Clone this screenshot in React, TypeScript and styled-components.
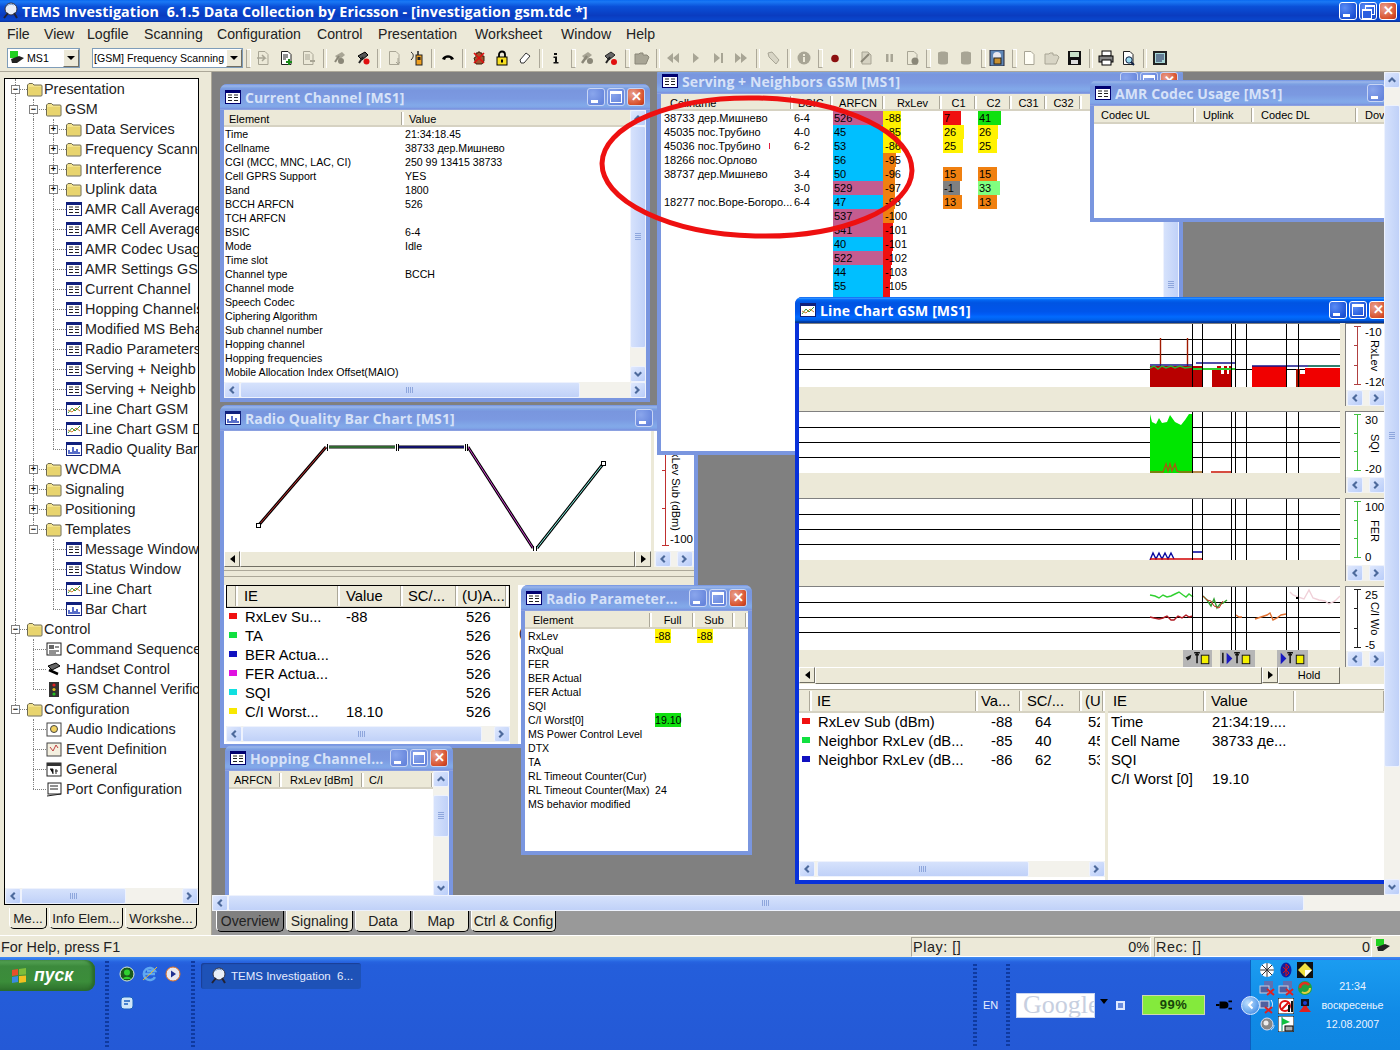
import React from 'react';
import styled, { createGlobalStyle, css } from 'styled-components';

const Global = createGlobalStyle`
  html, body { margin: 0; padding: 0; background: #ece9d8; }
  * { box-sizing: border-box; }
  #root { width: 1400px; height: 1050px; }
`;
const SANS = `"Liberation Sans", Arial, sans-serif`;
const TITLE = `"Open Sans", "Liberation Sans", sans-serif`;
const ACTIVE = `linear-gradient(180deg,#0058ee 0%,#3593ff 4%,#288eff 6%,#127dff 8%,#036ffc 10%,#0262ee 14%,#0057e5 20%,#0054e3 24%,#0055eb 56%,#005bf5 66%,#026afe 76%,#0062ef 86%,#0052d6 92%,#0040ab 94%,#003092 100%)`;
const INACTIVE = `linear-gradient(180deg,#7697e7 0,#7e9ee3 3%,#94afe8 6%,#97b4e9 8%,#82a5e4 14%,#7c9fe2 17%,#7996de 25%,#7b99e1 56%,#82a9e9 81%,#80a5e7 89%,#7b96e1 94%,#7a93df 97%,#abbae3 100%)`;

const Page = styled.div`
  width: 1400px; height: 1050px; overflow: hidden; display: flex; flex-direction: column;
  font-family: ${SANS}; background: #ece9d8; color: #000;
`;
const AppTitle = styled.div`
  height: 22px; display: flex; align-items: center; padding: 0 3px 0 2px; gap: 2px;
  background: linear-gradient(180deg,#0a6af0 0%,#1a78f5 8%,#0a50d8 30%,#0a3cc0 70%,#0a46cc 90%,#08309a 100%);
`;
const AppTitleText = styled.div`
  font: 700 14.3px ${TITLE}; color: #fff; flex: 1; white-space: pre; letter-spacing: 0.1px;
`;
const MenuBar = styled.div`
  height: 23px; display: flex; align-items: center; padding-left: 7px; font-size: 14.1px; background: #ece9d8; color: #222;
`;
const MenuItem = styled.span<{ $w: number }>`
  width: ${p => p.$w}px; flex: none; white-space: nowrap;
`;
const ToolBar = styled.div`
  height: 27px; display: flex; align-items: center; padding-left: 7px; background: #ece9d8; border-bottom: 1px solid #aca899;
`;
const Combo = styled.div<{ $w: number; $ml?: number }>`
  width: ${p => p.$w}px; margin-left: ${p => p.$ml ?? 0}px; height: 20px; background: #fff; border: 1px solid #7f9db9;
  display: flex; align-items: center; font-size: 10.6px; padding-left: 1px; gap: 1px; white-space: nowrap; overflow: hidden;
`;
const ComboText = styled.span`
  flex: 1; overflow: hidden;
`;
const ComboDrop = styled.span`
  width: 16px; height: 18px; background: #ece9d8; border: 1px solid; border-color: #fff #716f64 #716f64 #fff;
  display: flex; align-items: center; justify-content: center; flex: none;
  &::after { content: ''; border: 4px solid transparent; border-top: 4px solid #000; border-bottom: 0; }
`;
const ToolBtn = styled.span`
  width: 22.8px; height: 22px; display: flex; align-items: center; justify-content: center; flex: none;
`;
const ToolSep = styled.span<{ $grip?: boolean }>`
  width: 8.5px; height: 21px; flex: none; position: relative;
  &::after { content: ''; position: absolute; left: 3px; top: 1px; bottom: 1px; width: ${p => (p.$grip ? 3 : 2)}px;
    border-left: 1px solid #aca899; border-right: 1px solid #fff; ${p => p.$grip && css`border-top: 1px solid #fff; border-bottom: 1px solid #aca899;`} }
`;
const Main = styled.div`
  height: 863px; display: flex;
`;
const LeftPanel = styled.div`
  width: 212px; flex: none; display: flex; flex-direction: column; padding: 6px 12px 0 4px; background: #ece9d8;
  border-right: 1px solid #aca899;
`;
const TreeBox = styled.div`
  height: 827px; flex: none; border: 1px solid #000; background: #fff; display: flex; flex-direction: column; overflow: hidden;
`;
const TreeBody = styled.div`
  flex: 1; overflow: hidden; font-size: 14.4px;
`;
const TreeRow = styled.div<{ $pad: number }>`
  position: relative; height: 20px; display: flex; align-items: center; padding-left: ${p => p.$pad}px; white-space: nowrap; color: #222;
`;
const TreeLabel = styled.span<{ $gap: number }>`
  margin-left: ${p => p.$gap}px;
`;
const GuideV = styled.span<{ $x: number; $half?: boolean }>`
  position: absolute; left: ${p => p.$x}px; top: 0; height: ${p => (p.$half ? 10 : 20)}px; border-left: 1px dotted #808080;
`;
const GuideH = styled.span<{ $x: number; $w: number }>`
  position: absolute; left: ${p => p.$x}px; top: 10px; width: ${p => p.$w}px; border-top: 1px dotted #808080;
`;
const Expander = styled.span<{ $x: number }>`
  position: absolute; left: ${p => p.$x - 4}px; top: 6px; width: 9px; height: 9px; border: 1px solid #808080; background: #fff;
  font: 700 9px/7px ${SANS}; color: #000; display: flex; align-items: center; justify-content: center; z-index: 1;
`;
const TabRow = styled.div<{ $pl: number }>`
  display: flex; height: 21px; padding-left: ${p => p.$pl}px; margin-top: 3px; flex: none;
`;
const Tab = styled.div<{ $w: number; $on?: boolean; $small?: boolean }>`
  width: ${p => p.$w}px; height: 100%; margin-right: 2px; text-align: center; font-size: ${p => (p.$small ? 13.3 : 14)}px; line-height: 21px; color: #222;
  background: ${p => (p.$on ? '#808080' : '#ece9d8')}; border: 1px solid; border-color: #fff #000 #000 #fff; border-top: 0;
  border-radius: 0 0 5px 5px; white-space: nowrap; overflow: hidden;
`;
const Workspace = styled.div`
  flex: 1; display: flex; flex-direction: column; min-width: 0;
`;
const DeskRow = styled.div`
  height: 823px; display: flex; flex: none;
`;
const Desk = styled.div`
  position: relative; flex: 1; overflow: hidden; background: #808080;
`;
const TabStrip = styled.div`
  height: 24px; flex: none; background: #999; padding: 0 0 3px 4px; display: flex;
`;

const Win = styled.div<{ $x: number; $y: number; $w: number; $h: number; $on?: boolean }>`
  position: absolute; left: ${p => p.$x - 212}px; top: ${p => p.$y - 72}px; width: ${p => p.$w}px; height: ${p => p.$h}px;
  background: ${p => (p.$on ? '#0831d9' : '#7a96df')}; padding: 0 4px 4px; border-radius: 7px 7px 0 0;
  display: flex; flex-direction: column; overflow: hidden;
`;
const WinTitle = styled.div<{ $on?: boolean; $pr?: number }>`
  height: 26px; flex: none; margin: 0 -4px; padding: 0 ${p => p.$pr ?? 4}px 0 5px; display: flex; align-items: center; gap: 4px;
  background: ${p => (p.$on ? ACTIVE : INACTIVE)};
`;
const WinTitleText = styled.div<{ $on?: boolean }>`
  flex: 1; font: 700 14px ${TITLE}; color: ${p => (p.$on ? '#fff' : '#d6e2f8')}; white-space: nowrap; overflow: hidden; letter-spacing: .1px;
`;
const WinBtns = styled.div`
  display: flex; gap: 2px; flex: none;
`;
const WinBtn = styled.div<{ $kind: 'min' | 'max' | 'close' | 'restore'; $on?: boolean }>`
  width: 18px; height: 18px; border: 1px solid ${p => (p.$on ? '#fff' : '#c9d6f5')}; border-radius: 3px; position: relative; flex: none;
  background: ${p => p.$kind === 'close'
    ? 'radial-gradient(circle at 30% 30%, #e8a090, #d8502a 70%, #b8321a)'
    : p.$on ? 'radial-gradient(circle at 30% 30%, #5b8cf5, #1f55d8 70%, #1a46c0)' : 'radial-gradient(circle at 30% 30%, #8aa6ec, #6685dc 80%)'};
  ${p => p.$kind === 'min' && css`&::after { content: ''; position: absolute; left: 3px; bottom: 2px; width: 7px; height: 3px; background: #fff; }`}
  ${p => p.$kind === 'max' && css`&::after { content: ''; position: absolute; left: 2px; top: 2px; right: 2px; bottom: 2px; border: 1px solid #fff; border-top-width: 3px; }`}
  ${p => p.$kind === 'restore' && css`
    &::before { content: ''; position: absolute; left: 5px; top: 2px; width: 8px; height: 7px; border: 1px solid #fff; border-top-width: 2px; }
    &::after { content: ''; position: absolute; left: 2px; top: 6px; width: 8px; height: 7px; border: 1px solid #fff; border-top-width: 2px; background: #2a5fe0; }`}
  ${p => p.$kind === 'close' && css`&::after { content: '✕'; position: absolute; inset: 0; color: #fff; font: 700 13px/16px ${SANS}; text-align: center; }`}
`;
const WinBody = styled.div`
  flex: 1; background: #fff; display: flex; flex-direction: column; min-height: 0; overflow: hidden; position: relative;
`;
const Hz = styled.div`
  flex: 1; display: flex; min-height: 0;
`;
const Fill = styled.div`
  flex: 1; min-width: 0; min-height: 0; overflow: hidden; display: flex; flex-direction: column;
`;
const HeadRow = styled.div<{ $h: number; $size: number; $frame?: boolean }>`
  display: flex; height: ${p => p.$h}px; flex: none; background: #ece9d8; font-size: ${p => p.$size}px; border-bottom: 2px solid #d6d2c2;
  padding-top: ${p => (p.$size < 12 ? 2 : 1)}px;
  ${p => p.$frame && css`outline: 1px solid #000; outline-offset: -1px;`}
`;
const HeadCell = styled.div<{ $w: number; $pl?: number; $center?: boolean }>`
  width: ${p => p.$w}px; flex: none; padding-left: ${p => p.$pl ?? 5}px; display: flex; align-items: center; white-space: nowrap; overflow: hidden;
  border-right: 2px solid #fff; box-shadow: inset -1px 0 0 #aca899; ${p => p.$center && css`justify-content: center; padding-left: 0;`}
`;
const Row = styled.div<{ $h: number; $size: number }>`
  display: flex; height: ${p => p.$h}px; font-size: ${p => p.$size}px; line-height: ${p => p.$h}px; flex: none; white-space: nowrap;
`;
const Cell = styled.div<{ $w: number; $pl?: number }>`
  width: ${p => p.$w}px; flex: none; padding-left: ${p => p.$pl ?? 1}px; position: relative; overflow: hidden;
`;
const CellText = styled.span`
  position: relative;
`;
const Bar = styled.span<{ $w: number; $c: string; $x?: number }>`
  position: absolute; left: ${p => p.$x ?? 0}px; top: 0; bottom: 0; width: ${p => p.$w}px; background: ${p => p.$c};
`;
const Marker = styled.span<{ $c: string }>`
  display: block; width: 8px; height: 6px; margin: 5px 0 0 3px; background: ${p => p.$c};
`;
const RedTick = styled.span`
  position: absolute; left: 108px; top: 4px; width: 1px; height: 6px; background: #e02040;
`;

const ScrollH = styled.div`
  height: 16px; flex: none; display: flex; align-items: stretch; background: #f3f2ec;
`;
const ScrollV = styled.div`
  width: 16px; flex: none; display: flex; flex-direction: column; align-items: stretch; background: #f3f2ec;
`;
const Arrow = styled.div`
  width: 16px; height: 16px; flex: none; border-radius: 2px; border: 1px solid #eef2fd; background: linear-gradient(135deg,#dfe8fd,#b9cdf9);
  display: flex; align-items: center; justify-content: center;
`;
const ThumbH = styled.div<{ $l: number; $w: number }>`
  margin-left: ${p => p.$l}px; width: ${p => p.$w}px; background: linear-gradient(180deg,#d6e2fc,#c0d1f8); border: 1px solid #eef2fd; border-radius: 2px;
  display: flex; align-items: center; justify-content: center; flex: none;
  &::after { content: ''; width: 8px; height: 6px; background: repeating-linear-gradient(90deg,#8ea6dc 0 1px,transparent 1px 2px); }
`;
const ThumbV = styled.div<{ $t: number; $h: number }>`
  margin-top: ${p => p.$t}px; height: ${p => p.$h}px; background: linear-gradient(90deg,#d6e2fc,#c0d1f8); border: 1px solid #eef2fd; border-radius: 2px;
  display: flex; align-items: center; justify-content: center; flex: none;
  &::after { content: ''; width: 6px; height: 8px; background: repeating-linear-gradient(180deg,#8ea6dc 0 1px,transparent 1px 2px); }
`;
const Gap = styled.div`
  flex: 1;
`;
const ClassicBar = styled.div`
  height: 16px; flex: none; display: flex; background: #ece9d8;
`;
const ClassicBtn = styled.div<{ $dir: 'l' | 'r' }>`
  width: 16px; height: 16px; flex: none; background: #ece9d8; border: 1px solid; border-color: #fff #716f64 #716f64 #fff;
  display: flex; align-items: center; justify-content: center;
  &::after { content: ''; border: 4px solid transparent; ${p => (p.$dir === 'l' ? 'border-right: 5px solid #000; border-left: 0;' : 'border-left: 5px solid #000; border-right: 0;')} }
`;
const ClassicThumb = styled.div<{ $w?: number }>`
  ${p => (p.$w ? `width: ${p.$w}px; flex: none;` : 'flex: 1;')} background: #ece9d8; border: 1px solid; border-color: #fff #716f64 #716f64 #fff;
`;
const HoldBtn = styled.div`
  width: 62px; flex: none; text-align: center; font-size: 11px; line-height: 15px; background: #ece9d8; border: 1px solid; border-color: #fff #716f64 #716f64 #fff;
`;

const Splitter = styled.div`
  height: 18px; flex: none; background: #ece9d8; position: relative;
  &::after { content: ''; position: absolute; left: 0; right: 0; top: 3px; height: 5px; border-top: 1px solid #aca899; border-bottom: 1px solid #aca899; }
`;
const ChartRow = styled.div`
  height: 136px; flex: none; display: flex; background: #ece9d8;
`;
const ChartCol = styled.div<{ $w: number }>`
  width: ${p => p.$w}px; flex: none; display: flex; flex-direction: column;
`;
const QualSide = styled.div`
  flex: 1; display: flex; flex-direction: column; margin-left: 3px; background: #ece9d8;
`;
const QualLegend = styled.div`
  flex: 1; background: #fff; display: flex; align-items: flex-start; overflow: hidden; gap: 0; position: relative;
`;
const VText = styled.span<{ $size?: number }>`
  writing-mode: vertical-rl; font-size: ${p => p.$size ?? 11}px; white-space: nowrap; line-height: 12px;
`;
const LegendNum = styled.span`
  font-size: 11.5px; line-height: 13px; white-space: nowrap;
`;
const LegendStack = styled.div`
  display: flex; flex-direction: column; align-items: flex-start; justify-content: space-between; height: 100%; overflow: hidden; padding: 2px 0 1px;
`;
const QualStack = styled(LegendStack)`
  justify-content: flex-end; gap: 2px; padding: 0 0 5px; margin-left: -2px;
`;
const MidText = styled.div`
  padding-left: 4px;
`;
const ArrowPair = styled.div`
  height: 16px; flex: none; display: flex; justify-content: space-between; background: #f3f2ec; padding: 0 1px;
`;
const Panels = styled.div`
  display: flex; flex-direction: column; gap: 5px; flex: none; background: #ece9d8;
`;
const PanelRow = styled.div<{ $h: number }>`
  display: flex; height: ${p => p.$h}px; gap: 5px;
`;
const PanelPlot = styled.div`
  width: 541px; flex: none; display: flex; flex-direction: column;
  border-top: 1px solid #808080;
`;
const PlotStrip = styled.div`
  flex: 1; background: #ece9d8; display: flex; align-items: flex-end; padding-left: 384px;
`;
const EventBadge = styled.div<{ $w: number; $ml: number }>`
  width: ${p => p.$w}px; margin-left: ${p => p.$ml}px; height: 17px; background: #b6b6b6; display: flex; align-items: center; justify-content: center; flex: none;
`;
const PanelLegend = styled.div`
  width: 41px; flex: none; display: flex; flex-direction: column; border-top: 1px solid #808080; border-left: 1px solid #808080; min-width: 0;
`;
const LegendBody = styled.div`
  flex: 1; background: #fff; display: flex; gap: 1px; overflow: hidden; min-height: 0;
`;
const BelowBar = styled.div`
  display: flex; flex: none; height: 17px; background: #ece9d8;
`;
const Tables = styled.div`
  flex: 1; display: flex; min-height: 0; background: #fff; margin-top: 5px; border-top: 1px solid #aca899;
`;
const TableCol = styled.div<{ $w: number }>`
  width: ${p => p.$w}px; flex: none; display: flex; flex-direction: column; overflow: hidden; border-right: 3px solid #ece9d8;
`;
const QualTable = styled.div`
  width: 284px; margin-left: 2px; flex: none; display: flex; flex-direction: column; overflow: hidden; padding-bottom: 2px;
`;
const QualGutter = styled.div`
  width: 8px; flex: none; background: #ece9d8;
`;
const QualNext = styled.div`
  flex: 1; font-size: 12px; padding: 41px 0 0 1px;
`;

const StatusBar = styled.div`
  height: 22px; display: flex; align-items: center; font-size: 14.4px; background: #ece9d8; padding-left: 1px; color: #222;
  border-top: 1px solid #fff;
`;
const StatusHelp = styled.div`
  width: 910px; flex: none;
`;
const StatusPane = styled.div<{ $w: number }>`
  width: ${p => p.$w}px; flex: none; display: flex; justify-content: space-between; padding: 0 1px 0 1px; margin-right: 3px; height: 20px; line-height: 18px;
  border: 1px solid; border-color: #aca899 #fff #fff #aca899; white-space: pre;
`;
const Wide = styled.span`
  letter-spacing: .55px;
`;
const TaskBar = styled.div`
  height: 93px; flex: none; display: flex; background: linear-gradient(180deg,#3f8cf3 0,#2663e0 5px,#245edb 8px,#2459d6 100%); color: #fff; position: relative;
`;
const StartBtn = styled.div`
  width: 95px; height: 31px; margin-top: 3px; flex: none; border-radius: 0 9px 9px 0; background: linear-gradient(180deg,#5aa85a,#3c8a3c 20%,#3b8d3a 70%,#2c6e2c);
  display: flex; align-items: center; gap: 6px; padding-left: 10px; font: italic 700 17.5px ${SANS}; color: #fff; box-shadow: inset -3px 0 3px #2a6a2a;
`;
const Dots = styled.div<{ $ml: number }>`
  width: 4px; margin: 4px 0 3px ${p => p.$ml}px; flex: none; align-self: stretch; background: repeating-linear-gradient(180deg,#0f3aa0 0 2px,transparent 2px 4px);
`;
const Quick = styled.div`
  width: 73px; margin-left: 9px; padding-top: 8px; display: grid; grid-template-columns: repeat(3, 23px); grid-auto-rows: 29px; flex: none;
`;
const QuickIcon = styled.div`
  width: 18px; height: 18px; display: flex; align-items: center; justify-content: center;
`;
const TaskButton = styled.div`
  width: 160px; height: 26px; margin: 6px 0 0 6px; flex: none; background: #1e52b7; border-radius: 3px; display: flex; align-items: center; gap: 3px; padding-left: 9px;
  font-size: 11.5px; color: #e6ecff; box-shadow: inset 1px 1px 1px #1a3f96; white-space: pre;
`;
const RightTask = styled.div`
  margin-left: auto; display: flex; align-items: center; flex: none; padding-top: 3px;
`;
const EnBox = styled.div`
  font-size: 11px; margin: 0 0 0 6px; color: #e8eeff; width: 23px;
`;
const GoogleBox = styled.div`
  width: 79px; height: 25px; background: #fff; border: 1px solid #c8d4f0; overflow: hidden; font: 400 26px/22px "Liberation Serif", serif; color: #c7cfdf; padding-left: 6px; margin-left: 6px; white-space: nowrap;
`;
const DropTri = styled.div`
  margin: 0 0 8px 5px; border: 4px solid transparent; border-top: 5px solid #000; border-bottom: 0; flex: none;
`;
const MiniSq = styled.div`
  width: 9px; height: 9px; margin-left: 8px; border: 2px solid #dfe8ff; background: #6a8cdd; flex: none;
`;
const Battery = styled.div`
  width: 63px; height: 20px; margin-left: 17px; background: #84ea3c; border: 1px solid #cfd8b0; font: 700 13px/18px ${SANS}; letter-spacing: .5px; color: #17440a; text-align: center; flex: none;
`;
const PlugBox = styled.div`
  margin-left: 11px; width: 16px; display: flex; flex: none;
`;
const CollapseBtn = styled.div`
  width: 19px; height: 19px; margin-left: 9px; margin-right: -10px; border-radius: 50%; background: radial-gradient(circle at 35% 35%, #bfe0ff, #2a7de0); border: 1px solid #dceaff; display: flex; align-items: center; justify-content: center; z-index: 1; flex: none;
`;
const Tray = styled.div`
  width: 150px; height: 90px; flex: none; background: linear-gradient(180deg,#1b9cf0,#108ae6 60%,#0f86e2); border-left: 1px solid #0d5ec0; display: flex; padding: 2px 0 0 8px;
  align-self: flex-start;
`;
const TrayGrid = styled.div`
  width: 58px; display: grid; grid-template-columns: repeat(3, 19px); grid-auto-rows: 18px; flex: none;
`;
const Clock = styled.div`
  flex: 1; display: flex; flex-direction: column; align-items: center; gap: 5px; padding: 17px 12px 0 0; font-size: 10.7px; color: #eaf3ff; line-height: 14px;
`;

/* --------- Drawings --------- */
const Chevron: React.FC<{ d: 'l' | 'r' | 'u' | 'd' }> = ({ d }) => {
  const pts = { l: '6,1 2,5 6,9 7.5,7.5 5,5 7.5,2.5', r: '3,1 7,5 3,9 1.5,7.5 4,5 1.5,2.5', u: '1,6 5,2 9,6 7.5,7.5 5,5 2.5,7.5', d: '1,4 5,8 9,4 7.5,2.5 5,5 2.5,2.5' }[d];
  return <svg width="10" height="10" viewBox="0 0 10 10"><polygon points={pts} fill="#4d6a9c" /></svg>;
};
const Folder = () => (
  <svg width="16" height="15" viewBox="0 0 16 15" style={{ flex: 'none' }}><path d="M.5 4 V13 a1 1 0 0 0 1 1 H14 a1 1 0 0 0 1-1 V4 a1 1 0 0 0-1-1 H7 L5.5 1.5 H2 L.5 3 Z" fill="#f2e28c" stroke="#6e6a50" /><path d="M1.5 5 H14 V13 H1.5Z" fill="#e8d46e" /></svg>
);
const TableIco = ({ light }: { light?: boolean }) => (
  <svg width="16" height="14" viewBox="0 0 16 14" style={{ flex: 'none' }}>
    <rect x=".5" y=".5" width="15" height="13" fill="#fff" stroke={light ? '#000070' : '#10207c'} />
    <rect x="0" y="0" width="16" height="3" fill={light ? '#000070' : '#10207c'} />
    <path d="M3 5h4M3 7.5h4M3 10.5h4M9 5h4M9 7.5h4M9 10.5h4" stroke="#222" strokeWidth="1.2" />
  </svg>
);
const LineIco = () => (
  <svg width="16" height="14" viewBox="0 0 16 14" style={{ flex: 'none' }}>
    <rect x=".5" y=".5" width="15" height="13" fill="#fff" stroke="#10207c" />
    <rect x="0" y="0" width="16" height="3" fill="#10207c" />
    <path d="M2 11 L6 6 L9 9 L14 4" stroke="#3a9a3a" fill="none" /><path d="M2 8 L6 10 L10 6 L14 9" stroke="#d08030" fill="none" />
  </svg>
);
const BarIco = () => (
  <svg width="16" height="14" viewBox="0 0 16 14" style={{ flex: 'none' }}>
    <rect x=".5" y=".5" width="15" height="13" fill="#fff" stroke="#10207c" />
    <rect x="0" y="0" width="16" height="3" fill="#10207c" />
    <path d="M3 12V8M5 12V10M7 12V5M9 12V9M11 12V7M13 12V10" stroke="#1030b0" strokeWidth="1.4" />
  </svg>
);
const CfgIco = ({ k }: { k: string }) => (
  <svg width="17" height="15" viewBox="0 0 17 15" style={{ flex: 'none' }}>
    {k === 'cmd' && <><rect x="1" y="1" width="14" height="12" fill="#fff" stroke="#222" /><rect x="3" y="3" width="5" height="4" fill="#666" /><path d="M9 5h4M3 9h10M3 11h7" stroke="#222" /></>}
    {k === 'hand' && <><path d="M2 4 L10 1 L14 4 L6 8 Z" fill="#666" stroke="#000" /><path d="M3 8 L12 12" stroke="#000" strokeWidth="2.5" /></>}
    {k === 'traffic' && <><rect x="3" y="0" width="10" height="15" fill="#333" /><circle cx="8" cy="3" r="1.6" fill="#e02020" /><circle cx="8" cy="7.5" r="1.6" fill="#e0c020" /><circle cx="8" cy="12" r="1.6" fill="#20c020" /></>}
    {k === 'audio' && <><rect x="1" y="1" width="14" height="13" fill="#fff" stroke="#444" /><circle cx="8" cy="7" r="3.5" fill="#f0d060" stroke="#444" /></>}
    {k === 'event' && <><rect x="1" y="1" width="14" height="13" fill="#f4f0e0" stroke="#444" /><path d="M4 5l3 4 3-6 2 3" stroke="#c04040" fill="none" /></>}
    {k === 'general' && <><rect x="1" y="1" width="14" height="13" fill="#fff" stroke="#222" /><rect x="1" y="1" width="14" height="3" fill="#333" /><path d="M4 7h3v5M10 7v5M9 9h3" stroke="#222" /></>}
    {k === 'port' && <><rect x="2" y="1" width="13" height="11" fill="#fff" stroke="#222" /><path d="M1 14 L15 12 M4 4h8M4 7h8" stroke="#222" /></>}
  </svg>
);
const G: React.FC<{ k: string }> = ({ k }) => {
  const gray = '#a8a595', dark = '#8a8778';
  const Doc = (c: string, f = '#ece9d8') => <path d="M3.5 1.5 H10 L13 4.5 V14.5 H3.5 Z" fill={f} stroke={c} />;
  const body: Record<string, React.ReactNode> = {
    docA: <>{Doc(gray)}<path d="M2 8 H10 L7 5 M10 8 L7 11" stroke={gray} fill="none" strokeWidth="1.5" /></>,
    docP: <>{Doc('#222', '#fff')}<path d="M5 5h5M5 7h5M5 9h3" stroke="#222" /><path d="M11 9v6M8 12h6" stroke="#1a8a1a" strokeWidth="2" /></>,
    docG: <>{Doc(gray)}<path d="M5 5h5M5 7h5M5 9h5" stroke={gray} /><path d="M10 11h5" stroke={gray} strokeWidth="2" /></>,
    phG: <><path d="M3 6 L10 2 L13 5 L7 10 Z" fill={gray} /><circle cx="9" cy="11" r="3" fill={dark} /><path d="M3 12 L7 6" stroke={dark} strokeWidth="2" /></>,
    phR: <><path d="M3 6 L10 2 L13 5 L7 10 Z" fill="#555" stroke="#000" /><path d="M4 13 L8 7" stroke="#222" strokeWidth="2" /><circle cx="11.5" cy="11.5" r="3" fill="#e01010" /></>,
    docD: <>{Doc(gray)}<path d="M12 8v6M10 12l2 2 2-2" stroke={gray} fill="none" /></>,
    radio: <><rect x="7" y="5" width="6" height="10" fill="#f0a020" stroke="#222" /><path d="M9 5V1" stroke="#222" strokeWidth="1.5" /><path d="M2 2c3 2 3 5 0 8" stroke="#222" fill="none" /><rect x="8.5" y="7" width="3" height="3" fill="#222" /></>,
    handset: <path d="M2 9 C4 4 12 4 14 9 L11 10 L10 8 C8 7.5 8 7.5 6 8 L5 10 Z" fill="#000" />,
    hand: <><path d="M5 14 L3 8 L5 7 V3 H7 V2 H9 V3 H11 V6 H13 V11 L11 14 Z" fill="#a0522d" stroke="#402010" /><path d="M3 3 L13 13 M13 3 L3 13" stroke="#e01010" strokeWidth="1.6" /></>,
    lock: <><path d="M5 7 V4.5 a3 3 0 0 1 6 0 V7" stroke="#000" strokeWidth="1.8" fill="none" /><rect x="3" y="7" width="10" height="8" fill="#f8e020" stroke="#000" /><rect x="7" y="9.5" width="2" height="3" fill="#000" /></>,
    eraser: <path d="M3 10 L9 3 L13 6 L7 13 L4 13 Z" fill="#fff" stroke="#333" />,
    info: <path d="M6 3h3v2H6zM5.5 6.5H9V12h1.5v1.5h-5V12H7V8H5.5z" fill="#111" />,
    phG2: <><path d="M3 6 L9 2 L13 5 L7 10 Z" fill={gray} /><path d="M3 13 L8 6" stroke={dark} strokeWidth="2.5" /><circle cx="11" cy="11" r="3" fill={dark} /></>,
    phR2: <><path d="M3 6 L9 2 L13 5 L7 10 Z" fill="#666" stroke="#222" /><path d="M4 13 L8 7" stroke="#222" strokeWidth="2" /><circle cx="12" cy="12" r="3" fill="#e01010" /></>,
    folderG: <path d="M1 14 V4 H5 L6 3 H9 V5 H13 L15 7 L12 14 Z" fill={gray} stroke={dark} />,
    rew: <path d="M8 3 L2 8 L8 13 Z M14 3 L8 8 L14 13 Z" fill={gray} />,
    play: <path d="M5 3 L11 8 L5 13 Z" fill={gray} />,
    stepf: <><path d="M4 3 L10 8 L4 13 Z" fill={gray} /><rect x="11" y="3" width="2" height="10" fill={gray} /></>,
    ff: <path d="M2 3 L8 8 L2 13 Z M8 3 L14 8 L8 13 Z" fill={gray} />,
    torch: <path d="M3 3 L7 2 L14 10 L11 14 L4 7 Z" fill="#d8d5c5" stroke={gray} />,
    infoC: <><circle cx="8" cy="8" r="6.5" fill={gray} /><path d="M7 4h2v2H7zM7 7h2v5H7z" fill="#ece9d8" /></>,
    rec: <circle cx="8" cy="8.5" r="3.8" fill="#8c1010" />,
    recG: <><path d="M4 2 H10 L13 5 V14 H4 Z" fill="#d5d2c2" stroke={gray} /><path d="M3 12 L11 4" stroke={dark} strokeWidth="2" /></>,
    pause: <path d="M5 4h2.5v8H5zM9.5 4H12v8H9.5z" fill={gray} />,
    docC: <>{Doc(gray)}<circle cx="11" cy="11" r="3.5" fill={dark} /></>,
    cyl: <path d="M3 3 C3 1 13 1 13 3 V13 C13 15 3 15 3 13 Z" fill={gray} />,
    photo: <><rect x="1" y="0" width="14" height="16" fill="#6088b8" stroke="#223" /><circle cx="8" cy="6" r="4" fill="#e8e8f0" /><rect x="5" y="8" width="7" height="6" fill="#c89030" stroke="#222" /></>,
    doc: Doc(gray, '#fffef5'),
    fold: <path d="M1 14 V4 H5 L6 3 H9 V5 H13 L15 7 L12 14 Z" fill="#d8d5c5" stroke={gray} />,
    floppy: <><rect x="2" y="1" width="13" height="14" fill="#111" /><rect x="4" y="2" width="9" height="5" fill="#c8e0c8" /><rect x="5" y="10" width="7" height="4" fill="#ddd" /></>,
    printer: <><rect x="4" y="1" width="9" height="5" fill="#fff" stroke="#000" /><rect x="1" y="6" width="14" height="6" fill="#888" stroke="#000" /><rect x="4" y="10" width="9" height="5" fill="#fff" stroke="#000" /></>,
    prev: <>{Doc('#222', '#fff')}<circle cx="9" cy="10" r="3.2" fill="#9fdcf0" stroke="#124" /><path d="M11 12l3 3" stroke="#124" strokeWidth="2" /></>,
    screen: <><rect x="1" y="1" width="14" height="14" fill="#222" /><rect x="3" y="3" width="10" height="10" fill="#a8d8d8" /><path d="M4 5h8M4 7h8M4 9h8M4 11h6" stroke="#225" /></>,
  };
  return <svg width="16" height="16" viewBox="0 0 16 16">{body[k]}</svg>;
};
const MsIcon = () => (
  <svg width="17" height="17" viewBox="0 0 17 17" style={{ flex: 'none' }}>
    <rect x="1" y="1" width="8" height="7" fill="#20d020" /><path d="M2 9 L10 6 L15 8 L8 13 L3 13 Z" fill="#222" />
  </svg>
);
const TemsIcon = () => (
  <svg width="18" height="18" viewBox="0 0 18 18" style={{ flex: 'none' }}>
    <circle cx="9" cy="7" r="6" fill="#e8eef8" stroke="#334" /><path d="M4 5a6 6 0 0 1 8-2" stroke="#7aa0d0" fill="none" /><path d="M2 16 L6 11 M15 16 L12 11" stroke="#223" strokeWidth="2" />
  </svg>
);
const XpFlag = () => (
  <svg width="18" height="18" viewBox="0 0 18 18"><path d="M2 3 L8 2 V8 L2 9Z" fill="#e8502a" /><path d="M9 2 L16 1 V7.5 L9 8Z" fill="#7dbd3a" /><path d="M2 10 L8 9 V15 L2 16Z" fill="#3a8be0" /><path d="M9 9 L16 8.5 V15 L9 16Z" fill="#f2c020" /></svg>
);

const Event: React.FC<{ k: number }> = ({ k }) => (
  <svg width={k === 1 ? 29 : k === 2 ? 35 : 31} height="17" viewBox={`0 0 ${k === 1 ? 29 : k === 2 ? 35 : 31} 18`}>
    {k === 1 && <><path d="M2 8 L8 5 L7 9 L4 11Z" fill="#111" /><path d="M11 3h6M12 5h4M14 3v11" stroke="#111" strokeWidth="1.6" /><rect x="18.5" y="5.5" width="8" height="9" fill="#f4f000" stroke="#111" /></>}
    {k === 2 && <><path d="M2 3v11" stroke="#111" strokeWidth="1.6" /><path d="M6 3 L12 9 L6 15Z" fill="#1818c0" /><path d="M14 3h6M15 5h4M17 3v11" stroke="#111" strokeWidth="1.6" /><rect x="22.5" y="5.5" width="8" height="9" fill="#f4f000" stroke="#111" /></>}
    {k === 3 && <><path d="M3 3 L9 9 L3 15Z" fill="#1818c0" /><path d="M10 3h6M11 5h4M13 3v11" stroke="#111" strokeWidth="1.6" /><rect x="19.5" y="5.5" width="8" height="9" fill="#f4f000" stroke="#111" /></>}
  </svg>
);
const VLINES = [393, 403, 432, 436, 447, 487, 499];
const Plot: React.FC<{ h: number; children?: React.ReactNode }> = ({ h, children }) => (
  <svg width="541" height={h} viewBox={`0 0 541 ${h}`} style={{ display: 'block', flex: 'none', background: '#fff' }}>
    {[15, 30, 45].map(y => <line key={y} x1="0" x2="541" y1={y + .5} y2={y + .5} stroke="#000" />)}
    {children}
    {VLINES.map(x => <line key={x} x1={x + .5} x2={x + .5} y1={0} y2={h} stroke="#000" />)}
  </svg>
);
const Panel1 = () => (
  <Plot h={63}>
    <rect x="351" y="42" width="52" height="21" fill="#b80000" />
    <path d="M361.5 14V42M388.5 14V42" stroke="#a01a00" strokeWidth="1.4" />
    <path d="M413 63V46H418V42H422V50H425V42H428V50H430V42H432V63Z" fill="#c00000" />
    <rect x="453" y="42" width="34" height="21" fill="#f00000" />
    <rect x="497" y="45" width="4" height="18" fill="#a81000" />
    <path d="M501 63V50H506V44H541V63Z" fill="#f00000" />
    <path d="M351 41H393M397 39H436M453 42H509" stroke="#14148c" strokeWidth="1.4" />
    <polyline points="351,44 355,42 359,45 363,42 367,44 372,42 376,44 381,42 386,44 393,43" stroke="#30b030" fill="none" strokeWidth="1.4" />
    <path d="M393 45H437" stroke="#30d030" strokeWidth="2" />
    <path d="M509 42H541" stroke="#308070" strokeWidth="2" />
  </Plot>
);
const Panel2 = () => (
  <Plot h={61}>
    <polygon points="351,2 353,10 357,12 360,6 363,11 368,10 371,3 376,10 382,13 386,8 390,2 393,2 393,61 351,61" fill="#00e600" />
    <polyline points="351,60 364,60 367,52 369,59 371,52 373,59 376,52 378,59 381,60 403,60" stroke="#a06010" fill="none" strokeWidth="1.4" />
    <path d="M412 60H432" stroke="#c81000" strokeWidth="1.6" />
  </Plot>
);
const Panel3 = () => (
  <Plot h={61}>
    <polyline points="351,61 354,54 357,60 360,54 363,60 366,54 369,60 372,54 375,60" stroke="#0a0aa0" fill="none" strokeWidth="1.4" />
    <path d="M351 60H403" stroke="#d00000" strokeWidth="1.6" />
    <path d="M393 53H403" stroke="#0a0aa0" strokeWidth="1.6" />
  </Plot>
);
const Panel4 = () => (
  <Plot h={63}>
    <polyline points="351,8 356,9 360,11 364,8 368,10 372,9 376,7 380,5 384,8 387,10 390,7 394,10" stroke="#30d030" fill="none" strokeWidth="1.4" />
    <polyline points="351,30 355,31 360,32 364,31 368,29 372,33 375,33 379,29 383,31 387,28 390,30 394,29" stroke="#b01820" fill="none" strokeWidth="1.4" />
    <polyline points="404,9 408,13 412,19 415,12 418,21 421,17 424,16 428,13" stroke="#30a030" fill="none" strokeWidth="1.4" />
    <polyline points="404,9 408,13 412,14 415,19 420,21 424,14" stroke="#c03020" fill="none" strokeWidth="1" />
    <polyline points="437,28 440,30 443,30" stroke="#e07030" fill="none" strokeWidth="1.4" />
    <polyline points="456,32 462,30 468,28 471,26 474,33 478,31 482,28 487,27" stroke="#e07030" fill="none" strokeWidth="1.4" />
    <polyline points="491,5 494,8 499,10 505,12 510,3 514,11 520,13 526,14 530,17 536,14 541,9" stroke="#f0d0d8" fill="none" strokeWidth="1.4" />
    <path d="M497 11h2" stroke="#000" strokeWidth="2" />
  </Plot>
);
const Axis: React.FC<{ c: string; h: number; top?: number }> = ({ c, h, top = 2 }) => (
  <svg width="13" height={h} viewBox={`0 0 13 ${h}`} style={{ flex: 'none', marginLeft: 5 }}>
    <line x1="6.5" x2="6.5" y1={top} y2={h - 3} stroke={c} />
    {[0, 1, 2, 3].map(i => {
      const y = Math.round(top + i * ((h - 3 - top) / 3));
      return <line key={i} x1={3} x2={i === 0 || i === 3 ? 10 : 6.5} y1={y + .5} y2={y + .5} stroke={c} />;
    })}
  </svg>
);
const QualChart = () => (
  <svg width="427" height="120" viewBox="0 0 427 120" style={{ display: 'block', flex: 'none', background: '#fff' }}>
    <path d="M34 95 L102 16" stroke="#000" strokeWidth="3" /><path d="M34 95 L102 16" stroke="#c83030" />
    <path d="M105 16 H171" stroke="#000" strokeWidth="3" /><path d="M105 16 H171" stroke="#60d060" />
    <path d="M175 16 H240" stroke="#000" strokeWidth="3" /><path d="M175 16 H240" stroke="#2020d0" />
    <path d="M244 16 L309 117" stroke="#000" strokeWidth="3" /><path d="M244 16 L309 117" stroke="#d040d0" />
    <path d="M313 117 L379 33" stroke="#000" strokeWidth="3" /><path d="M313 117 L379 33" stroke="#80f0e0" />
    <rect x="32.5" y="92.5" width="4" height="4" fill="#fff" stroke="#000" />
    <rect x="377.5" y="30.5" width="4" height="4" fill="#fff" stroke="#000" />
    {[103, 172, 174, 241, 243].map(x => <line key={x} x1={x + .5} x2={x + .5} y1="13" y2="20" stroke="#000" />)}
    <path d="M309.5 115v5M312.5 115v5" stroke="#000" />
  </svg>
);

/* ---------- data ---------- */
type Node = { t: string; l: 0 | 1 | 2; k: string; e?: '+' | '-' };
const TREE: Node[] = [
  { t: 'Presentation', l: 0, k: 'f', e: '-' }, { t: 'GSM', l: 1, k: 'f', e: '-' },
  { t: 'Data Services', l: 2, k: 'f', e: '+' }, { t: 'Frequency Scann', l: 2, k: 'f', e: '+' },
  { t: 'Interference', l: 2, k: 'f', e: '+' }, { t: 'Uplink data', l: 2, k: 'f', e: '+' },
  { t: 'AMR Call Average', l: 2, k: 't' }, { t: 'AMR Cell Average', l: 2, k: 't' }, { t: 'AMR Codec Usag', l: 2, k: 't' },
  { t: 'AMR Settings GS', l: 2, k: 't' }, { t: 'Current Channel', l: 2, k: 't' }, { t: 'Hopping Channels', l: 2, k: 't' },
  { t: 'Modified MS Beha', l: 2, k: 't' }, { t: 'Radio Parameters', l: 2, k: 't' }, { t: 'Serving + Neighb', l: 2, k: 't' },
  { t: 'Serving + Neighb', l: 2, k: 't' }, { t: 'Line Chart GSM', l: 2, k: 'l' }, { t: 'Line Chart GSM D', l: 2, k: 'l' },
  { t: 'Radio Quality Bar', l: 2, k: 'b' }, { t: 'WCDMA', l: 1, k: 'f', e: '+' }, { t: 'Signaling', l: 1, k: 'f', e: '+' },
  { t: 'Positioning', l: 1, k: 'f', e: '+' }, { t: 'Templates', l: 1, k: 'f', e: '-' },
  { t: 'Message Window', l: 2, k: 't' }, { t: 'Status Window', l: 2, k: 't' }, { t: 'Line Chart', l: 2, k: 'l' }, { t: 'Bar Chart', l: 2, k: 'b' },
  { t: 'Control', l: 0, k: 'f', e: '-' }, { t: 'Command Sequence', l: 1, k: 'cmd' }, { t: 'Handset Control', l: 1, k: 'hand' },
  { t: 'GSM Channel Verifica', l: 1, k: 'traffic' }, { t: 'Configuration', l: 0, k: 'f', e: '-' }, { t: 'Audio Indications', l: 1, k: 'audio' },
  { t: 'Event Definition', l: 1, k: 'event' }, { t: 'General', l: 1, k: 'general' }, { t: 'Port Configuration', l: 1, k: 'port' },
];
const G0 = 10, G1 = 28, G2 = 48;
const guides = (i: number) => {
  const g: { x: number; half?: boolean }[] = [];
  if (i <= 31) g.push({ x: G0, half: i === 31 });
  if (i >= 1 && i <= 22) g.push({ x: G1, half: i === 22 });
  if (i >= 28 && i <= 30) g.push({ x: G1, half: i === 30 });
  if (i >= 32 && i <= 35) g.push({ x: G1, half: i === 35 });
  if (i >= 2 && i <= 18) g.push({ x: G2, half: i === 18 });
  if (i >= 23 && i <= 26) g.push({ x: G2, half: i === 26 });
  return g;
};
const TreeIcon: React.FC<{ k: string }> = ({ k }) => {
  if (k === 'f') return <Folder />;
  if (k === 't') return <TableIco />;
  if (k === 'l') return <LineIco />;
  if (k === 'b') return <BarIco />;
  return <CfgIco k={k} />;
};
const PAD = { 0: 22, 1: 41, 2: 61 } as const;
const EXP = { 0: G0, 1: G1, 2: G2 } as const;

const TOOLS: string[] = ['docA', 'docP', 'docG', '|', 'phG', 'phR', '|', 'docD', 'radio', '|', 'handset', '|', 'hand', 'lock', 'eraser', '|', 'info', '#', 'phG2', 'phR2', '#', 'folderG', '|', 'rew', 'play', 'stepf', 'ff', '|', 'torch', '|', 'infoC', '#', 'rec', '|', 'recG', 'pause', 'docC', '#', 'cyl', 'cyl', '#', 'photo', '#', 'doc', 'fold', 'floppy', '|', 'printer', 'prev', '|', 'screen'];
const MENU: [string, number][] = [['File', 37], ['View', 43], ['Logfile', 57], ['Scanning', 73], ['Configuration', 100], ['Control', 61], ['Presentation', 97], ['Worksheet', 86], ['Window', 65], ['Help', 40]];
const CHANNEL: [string, string][] = [
  ['Time', '21:34:18.45'], ['Cellname', '38733 дер.Мишнево'], ['CGI (MCC, MNC, LAC, CI)', '250 99 13415 38733'], ['Cell GPRS Support', 'YES'],
  ['Band', '1800'], ['BCCH ARFCN', '526'], ['TCH ARFCN', ''], ['BSIC', '6-4'], ['Mode', 'Idle'], ['Time slot', ''], ['Channel type', 'BCCH'],
  ['Channel mode', ''], ['Speech Codec', ''], ['Ciphering Algorithm', ''], ['Sub channel number', ''], ['Hopping channel', ''], ['Hopping frequencies', ''],
  ['Mobile Allocation Index Offset(MAIO)', ''],
];
const PINK = '#c45c90', CYAN = '#00bfff', YEL = '#fff200', ORG = '#f08010', RED = '#f01010', GRY = '#808080', GRN = '#10e010', LGR = '#80ff80';
type Sv = { n?: string; b?: string; a: string; ac: string; r: string; rw: number; rc: string; c1?: [string, number, string]; c2?: [string, number, string]; tick?: boolean };
const SERVING: Sv[] = [
  { n: '38733 дер.Мишнево', b: '6-4', a: '526', ac: PINK, r: '-88', rw: 18, rc: YEL, c1: ['7', 18, RED], c2: ['41', 23, GRN] },
  { n: '45035 пос.Трубино', b: '4-0', a: '45', ac: CYAN, r: '-85', rw: 18, rc: YEL, c1: ['26', 21, YEL], c2: ['26', 20, YEL] },
  { n: '45036 пос.Трубино', b: '6-2', a: '53', ac: CYAN, r: '-86', rw: 18, rc: YEL, c1: ['25', 20, YEL], c2: ['25', 19, YEL], tick: true },
  { n: '18266 пос.Орлово', a: '56', ac: CYAN, r: '-95', rw: 13, rc: ORG },
  { n: '38737 дер.Мишнево', b: '3-4', a: '50', ac: CYAN, r: '-96', rw: 12, rc: ORG, c1: ['15', 19, ORG], c2: ['15', 19, ORG] },
  { b: '3-0', a: '529', ac: PINK, r: '-97', rw: 12, rc: ORG, c1: ['-1', 17, GRY], c2: ['33', 22, LGR] },
  { n: '18277 пос.Воре-Богоро...', b: '6-4', a: '47', ac: CYAN, r: '-98', rw: 12, rc: ORG, c1: ['13', 19, ORG], c2: ['13', 19, ORG] },
  { a: '537', ac: PINK, r: '-100', rw: 11, rc: ORG },
  { a: '541', ac: PINK, r: '-101', rw: 10, rc: RED },
  { a: '40', ac: CYAN, r: '-101', rw: 10, rc: RED },
  { a: '522', ac: PINK, r: '-102', rw: 9, rc: RED },
  { a: '44', ac: CYAN, r: '-103', rw: 8, rc: RED },
  { a: '55', ac: CYAN, r: '-105', rw: 7, rc: RED },
  { a: '', ac: CYAN, r: '', rw: 7, rc: RED },
];
const QUAL: [string, string, string, string][] = [
  ['#f01010', 'RxLev Su...', '-88', '526'], ['#10e040', 'TA', '', '526'], ['#1010c0', 'BER Actua...', '', '526'],
  ['#e010e0', 'FER Actua...', '', '526'], ['#10e0e0', 'SQI', '', '526'], ['#f8e800', 'C/I Worst...', '18.10', '526'],
];
const RP: [string, string?, string?, string?][] = [
  ['RxLev', '-88', '-88', 'y'], ['RxQual'], ['FER'], ['BER Actual'], ['FER Actual'], ['SQI'], ['C/I Worst[0]', '19.10', '', 'g'], ['MS Power Control Level'],
  ['DTX'], ['TA'], ['RL Timeout Counter(Cur)'], ['RL Timeout Counter(Max)', '24'], ['MS behavior modified'],
];

const HS: React.FC<{ l: number; w: number }> = ({ l, w }) => (
  <ScrollH><Arrow><Chevron d="l" /></Arrow><ThumbH $l={l} $w={w} /><Gap /><Arrow><Chevron d="r" /></Arrow></ScrollH>
);
const VS: React.FC<{ t: number; h: number }> = ({ t, h }) => (
  <ScrollV><Arrow><Chevron d="u" /></Arrow><ThumbV $t={t} $h={h} /><Gap /><Arrow><Chevron d="d" /></Arrow></ScrollV>
);
const Btns: React.FC<{ on?: boolean; only?: boolean }> = ({ on, only }) => (
  <WinBtns>
    <WinBtn $kind="min" $on={on} />
    {!only && <WinBtn $kind="max" $on={on} />}
    {!only && <WinBtn $kind="close" $on={on} />}
  </WinBtns>
);
const Legend: React.FC<{ c: string; h: number; a: string; m: string; b: string }> = ({ c, h, a, m, b }) => (
  <PanelLegend>
    <LegendBody>
      <Axis c={c} h={h} />
      <LegendStack><LegendNum>{a}</LegendNum><MidText><VText>{m}</VText></MidText><LegendNum>{b}</LegendNum></LegendStack>
    </LegendBody>
    <ArrowPair><Arrow><Chevron d="l" /></Arrow><Arrow><Chevron d="r" /></Arrow></ArrowPair>
  </PanelLegend>
);

export default function App() {
  return (
    <Page>
      <Global />
      <AppTitle>
        <TemsIcon />
        <AppTitleText>{'TEMS Investigation  6.1.5 Data Collection by Ericsson - [investigation gsm.tdc *]'}</AppTitleText>
        <WinBtns><WinBtn $kind="min" $on /><WinBtn $kind="restore" $on /><WinBtn $kind="close" $on /></WinBtns>
      </AppTitle>
      <MenuBar>{MENU.map(([m, w]) => <MenuItem key={m} $w={w}>{m}</MenuItem>)}</MenuBar>
      <ToolBar>
        <Combo $w={73}><MsIcon /><ComboText>MS1</ComboText><ComboDrop /></Combo>
        <Combo $w={151} $ml={12}><ComboText>[GSM] Frequency Scanning</ComboText><ComboDrop /></Combo>
        <ToolSep $grip />
        {TOOLS.map((t, i) => t === '|' ? <ToolSep key={i} /> : t === '#' ? <ToolSep key={i} $grip /> : <ToolBtn key={i}><G k={t} /></ToolBtn>)}
      </ToolBar>
      <Main>
        <LeftPanel>
          <TreeBox>
            <TreeBody>
              {TREE.map((n, i) => (
                <TreeRow key={i} $pad={PAD[n.l]}>
                  {guides(i).map((g, j) => <GuideV key={j} $x={g.x} $half={g.half} />)}
                  <GuideH $x={EXP[n.l]} $w={n.l === 0 ? 12 : 13} />
                  {n.e && <Expander $x={EXP[n.l]}>{n.e === '-' ? '−' : '+'}</Expander>}
                  <TreeIcon k={n.k} />
                  <TreeLabel $gap={n.l === 0 ? 1 : 3}>{n.t}</TreeLabel>
                </TreeRow>
              ))}
            </TreeBody>
            <HS l={0} w={105} />
          </TreeBox>
          <TabRow $pl={5}>
            <Tab $w={38} $small>Me...</Tab>
            <Tab $w={74} $small>Info Elem...</Tab>
            <Tab $w={72} $small>Workshe...</Tab>
          </TabRow>
        </LeftPanel>
        <Workspace>
          <DeskRow>
            <Desk>
              <Win $x={220} $y={84} $w={430} $h={318}>
                <WinTitle $pr={5}><TableIco light /><WinTitleText>Current Channel [MS1]</WinTitleText><Btns /></WinTitle>
                <WinBody>
                  <Hz>
                    <Fill>
                      <HeadRow $h={17} $size={11}><HeadCell $w={180}>Element</HeadCell><HeadCell $w={230}>Value</HeadCell></HeadRow>
                      {CHANNEL.map(([a, b]) => (
                        <Row key={a} $h={14} $size={10.6}><Cell $w={180}>{a}</Cell><Cell $w={220}>{b}</Cell></Row>
                      ))}
                    </Fill>
                    <VS t={0} h={222} />
                  </Hz>
                  <HS l={0} w={340} />
                </WinBody>
              </Win>
              <Win $x={220} $y={405} $w={478} $h={343}>
                <WinTitle $pr={45}><BarIco /><WinTitleText>Radio Quality Bar Chart [MS1]</WinTitleText><Btns only /></WinTitle>
                <WinBody>
                  <ChartRow>
                    <ChartCol $w={427}>
                      <QualChart />
                      <ClassicBar><ClassicBtn $dir="l" /><ClassicThumb /><ClassicBtn $dir="r" /></ClassicBar>
                    </ChartCol>
                    <QualSide>
                      <QualLegend>
                        <Axis c="#c03030" h={117} />
                        <QualStack><VText>RxLev Sub (dBm)</VText><LegendNum>-100</LegendNum></QualStack>
                      </QualLegend>
                      <ArrowPair><Arrow><Chevron d="l" /></Arrow><Arrow><Chevron d="r" /></Arrow></ArrowPair>
                    </QualSide>
                  </ChartRow>
                  <Splitter />
                  <Hz>
                    <QualTable>
                      <HeadRow $h={23} $size={14.8} $frame>
                        <HeadCell $w={12} $pl={0} />
                        <HeadCell $w={102} $pl={6}>IE</HeadCell><HeadCell $w={63} $pl={6}>Value</HeadCell><HeadCell $w={55}>SC/...</HeadCell><HeadCell $w={50} $pl={4}>(U)A...</HeadCell>
                      </HeadRow>
                      {QUAL.map(([c, a, b, d]) => (
                        <Row key={a} $h={19} $size={14.8}>
                          <Cell $w={18} $pl={0}><Marker $c={c} /></Cell><Cell $w={101}>{a}</Cell><Cell $w={120}>{b}</Cell><Cell $w={44}>{d}</Cell>
                        </Row>
                      ))}
                      <Gap />
                      <HS l={0} w={240} />
                    </QualTable>
                    <QualGutter />
                    <QualNext>(</QualNext>
                  </Hz>
                </WinBody>
              </Win>
              <Win $x={657} $y={68} $w={526} $h={387}>
                <WinTitle $pr={5}><TableIco light /><WinTitleText>Serving + Neighbors GSM [MS1]</WinTitleText><Btns /></WinTitle>
                <WinBody>
                  <Hz>
                    <Fill>
                      <HeadRow $h={17} $size={11}>
                        <HeadCell $w={132} $pl={9}>Cellname</HeadCell><HeadCell $w={40}>BSIC</HeadCell><HeadCell $w={52} $center>ARFCN</HeadCell>
                        <HeadCell $w={57} $center>RxLev</HeadCell><HeadCell $w={35} $center>C1</HeadCell><HeadCell $w={35} $center>C2</HeadCell>
                        <HeadCell $w={35} $center>C31</HeadCell><HeadCell $w={35} $center>C32</HeadCell><HeadCell $w={90} />
                      </HeadRow>
                      {SERVING.map((r, i) => (
                        <Row key={i} $h={14} $size={11}>
                          <Cell $w={132} $pl={3}>{r.tick && <RedTick />}{r.n}</Cell>
                          <Cell $w={40} $pl={1}>{r.b}</Cell>
                          <Cell $w={50} $pl={1}><Bar $w={50} $c={r.ac} /><CellText>{r.a}</CellText></Cell>
                          <Cell $w={60} $pl={2}><Bar $w={r.rw} $c={r.rc} /><CellText>{r.r}</CellText></Cell>
                          <Cell $w={35} $pl={1}>{r.c1 && <Bar $w={r.c1[1]} $c={r.c1[2]} />}<CellText>{r.c1?.[0]}</CellText></Cell>
                          <Cell $w={35} $pl={1}>{r.c2 && <Bar $w={r.c2[1]} $c={r.c2[2]} />}<CellText>{r.c2?.[0]}</CellText></Cell>
                        </Row>
                      ))}
                    </Fill>
                    <VS t={100} h={150} />
                  </Hz>
                </WinBody>
              </Win>
              <Win $x={225} $y={745} $w={228} $h={155}>
                <WinTitle $pr={5}><TableIco light /><WinTitleText>Hopping Channel...</WinTitleText><Btns /></WinTitle>
                <WinBody>
                  <Hz>
                    <Fill>
                      <HeadRow $h={18} $size={11}><HeadCell $w={53}>ARFCN</HeadCell><HeadCell $w={82} $pl={8}>RxLev [dBm]</HeadCell><HeadCell $w={70}>C/I</HeadCell></HeadRow>
                    </Fill>
                    <VS t={8} h={42} />
                  </Hz>
                </WinBody>
              </Win>
              <Win $x={521} $y={585} $w={231} $h={270}>
                <WinTitle $pr={5}><TableIco light /><WinTitleText>Radio Parameter...</WinTitleText><Btns /></WinTitle>
                <WinBody>
                  <HeadRow $h={18} $size={11}><HeadCell $w={127} $pl={8}>Element</HeadCell><HeadCell $w={43} $center>Full</HeadCell><HeadCell $w={40} $center>Sub</HeadCell><HeadCell $w={13} /></HeadRow>
                  {RP.map(([a, b, c, m]) => (
                    <Row key={a} $h={14} $size={10.6}>
                      <Cell $w={130} $pl={3}>{a}</Cell>
                      <Cell $w={42} $pl={0}>{b && m && <Bar $w={m === 'g' ? 26 : 16} $c={m === 'g' ? GRN : YEL} />}<CellText>{b}</CellText></Cell>
                      <Cell $w={40} $pl={0}>{c && <Bar $w={16} $c={YEL} />}<CellText>{c}</CellText></Cell>
                    </Row>
                  ))}
                </WinBody>
              </Win>
              <Win $x={1090} $y={80} $w={300} $h={142}>
                <WinTitle $pr={5}><TableIco light /><WinTitleText>AMR Codec Usage [MS1]</WinTitleText><WinBtn $kind="min" /></WinTitle>
                <WinBody>
                  <HeadRow $h={18} $size={11}><HeadCell $w={102} $pl={7}>Codec UL</HeadCell><HeadCell $w={58} $pl={7}>Uplink</HeadCell><HeadCell $w={104} $pl={7}>Codec DL</HeadCell><HeadCell $w={40} $pl={7}>Dov</HeadCell></HeadRow>
                </WinBody>
              </Win>
              <Win $x={795} $y={297} $w={605} $h={587} $on>
                <WinTitle $on $pr={13}><LineIco /><WinTitleText $on>Line Chart GSM [MS1]</WinTitleText><Btns on /></WinTitle>
                <WinBody>
                  <Panels>
                    <PanelRow $h={83}><PanelPlot><Panel1 /><PlotStrip /></PanelPlot><Legend c="#b04040" h={63} a="-10" m="RxLev" b="-120" /></PanelRow>
                    <PanelRow $h={82}><PanelPlot><Panel2 /><PlotStrip /></PanelPlot><Legend c="#40c040" h={61} a="30" m="SQI" b="-20" /></PanelRow>
                    <PanelRow $h={83}><PanelPlot><Panel3 /><PlotStrip /></PanelPlot><Legend c="#40c040" h={61} a="100" m="FER" b="0" /></PanelRow>
                    <PanelRow $h={81}><PanelPlot><Panel4 /><PlotStrip>
                      <EventBadge $w={29} $ml={0}><Event k={1} /></EventBadge>
                      <EventBadge $w={35} $ml={8}><Event k={2} /></EventBadge>
                      <EventBadge $w={31} $ml={22}><Event k={3} /></EventBadge>
                    </PlotStrip></PanelPlot><Legend c="#222" h={63} a="25" m="C/I Wo" b="-5" /></PanelRow>
                  </Panels>
                  <BelowBar>
                    <ClassicBtn $dir="l" /><ClassicThumb $w={447} /><ClassicBtn $dir="r" /><HoldBtn>Hold</HoldBtn>
                  </BelowBar>
                  <Tables>
                    <TableCol $w={309}>
                      <HeadRow $h={23} $size={14.8}>
                        <HeadCell $w={13} $pl={0} /><HeadCell $w={166}>IE</HeadCell><HeadCell $w={44} $pl={3}>Va...</HeadCell><HeadCell $w={60}>SC/...</HeadCell><HeadCell $w={23} $pl={3}>(U</HeadCell>
                      </HeadRow>
                      {[['#f01010', 'RxLev Sub (dBm)', '-88', '64', '52'], ['#10e040', 'Neighbor RxLev (dB...', '-85', '40', '45'], ['#1010c0', 'Neighbor RxLev (dB...', '-86', '62', '53']].map(([c, a, b, d, e]) => (
                        <Row key={b} $h={19} $size={14.8}>
                          <Cell $w={16} $pl={0}><Marker $c={c} /></Cell><Cell $w={175} $pl={3}>{a}</Cell><Cell $w={44}>{b}</Cell><Cell $w={53}>{d}</Cell><Cell $w={13}>{e}</Cell>
                        </Row>
                      ))}
                      <Gap />
                      <HS l={2} w={212} />
                      <Row $h={3} $size={3} />
                    </TableCol>
                    <Fill>
                      <HeadRow $h={23} $size={14.8}><HeadCell $w={98}>IE</HeadCell><HeadCell $w={90}>Value</HeadCell><HeadCell $w={90} /></HeadRow>
                      {[['Time', '21:34:19....'], ['Cell Name', '38733 де...'], ['SQI', ''], ['C/I Worst [0]', '19.10']].map(([a, b]) => (
                        <Row key={a} $h={19} $size={14.8}><Cell $w={103} $pl={3}>{a}</Cell><Cell $w={120}>{b}</Cell></Row>
                      ))}
                    </Fill>
                  </Tables>
                </WinBody>
              </Win>
              <svg width="1170" height="300" viewBox="0 0 1170 300" style={{ position: 'absolute', left: 0, top: 0, pointerEvents: 'none' }}>
                <ellipse cx="545" cy="95" rx="155" ry="69" fill="none" stroke="#ee1010" strokeWidth="5" transform="rotate(1.5 545 95)" />
              </svg>
            </Desk>
            <ScrollV><Arrow><Chevron d="u" /></Arrow><ThumbV $t={17} $h={662} /><Gap /><Arrow><Chevron d="d" /></Arrow></ScrollV>
          </DeskRow>
          <ScrollH><Arrow><Chevron d="l" /></Arrow><ThumbH $l={0} $w={1076} /><Gap /></ScrollH>
          <TabStrip>
            <Tab $w={68} $on>Overview</Tab><Tab $w={67}>Signaling</Tab><Tab $w={56}>Data</Tab><Tab $w={56}>Map</Tab><Tab $w={85}>Ctrl &amp; Config</Tab>
          </TabStrip>
        </Workspace>
      </Main>
      <StatusBar>
        <StatusHelp>For Help, press F1</StatusHelp>
        <StatusPane $w={240}><Wide>Play: []</Wide><span>0%</span></StatusPane>
        <StatusPane $w={218}><Wide>Rec: []</Wide><span>0</span></StatusPane>
        <MsIcon />
      </StatusBar>
      <TaskBar>
        <StartBtn><XpFlag />пуск</StartBtn>
        <Dots $ml={10} />
        <Quick>
          <QuickIcon><svg width="16" height="16" viewBox="0 0 16 16"><circle cx="8" cy="8" r="7" fill="#1a5a1a" stroke="#d8e8d8" /><circle cx="8" cy="6.5" r="3" fill="#30d030" /><path d="M4 13c1-3 7-3 8 0" fill="#30d030" /></svg></QuickIcon>
          <QuickIcon><svg width="18" height="18" viewBox="0 0 18 18"><path d="M14 12a6 6 0 1 1 0-6H6 M4 9h10" fill="none" stroke="#60a8f0" strokeWidth="2.5" /><path d="M2 15C6 12 12 6 16 2" stroke="#f0c030" fill="none" /></svg></QuickIcon>
          <QuickIcon><svg width="16" height="16" viewBox="0 0 16 16"><circle cx="8" cy="8" r="7" fill="#e8e8f0" stroke="#e07020" /><path d="M6 4.5 L11 8 L6 11.5Z" fill="#203090" /></svg></QuickIcon>
          <QuickIcon><svg width="16" height="16" viewBox="0 0 16 16"><rect x="2" y="2" width="12" height="12" rx="3" fill="#cfe6f8" stroke="#1a60c0" /><path d="M5 6h6M5 9h4" stroke="#1a60c0" strokeWidth="1.5" /></svg></QuickIcon>
        </Quick>
        <Dots $ml={0} />
        <TaskButton><TemsIcon /><span>{'TEMS Investigation  6...'}</span></TaskButton>
        <RightTask>
          <Dots $ml={0} />
          <EnBox>EN</EnBox>
          <Dots $ml={0} />
          <GoogleBox>Google</GoogleBox>
          <DropTri /><MiniSq /><Battery>99%</Battery>
          <PlugBox><svg width="18" height="14" viewBox="0 0 18 14"><path d="M0 7h4M14 3h4M14 11h4" stroke="#000" strokeWidth="2" /><path d="M4 3 H10 a4 4 0 0 1 4 4 a4 4 0 0 1-4 4 H4 Z" fill="#000" /></svg></PlugBox>
          <CollapseBtn><svg width="10" height="10" viewBox="0 0 10 10"><path d="M6.5 1.5 L3 5 L6.5 8.5" stroke="#fff" strokeWidth="2" fill="none" /></svg></CollapseBtn>
          <Tray>
            <TrayGrid>
              {[
                <><circle cx="8" cy="8" r="7" fill="#fff" /><path d="M8 1v14M1 8h14M3 3l10 10M13 3L3 13" stroke="#333" /></>,
                <><ellipse cx="8" cy="8" rx="5.5" ry="7.5" fill="#1020a0" /><path d="M5 5l6 6-3 3V2l3 3-6 6" stroke="#e01010" fill="none" /></>,
                <><rect width="16" height="16" fill="#111" /><path d="M8 1 L15 8 L8 15 L1 8Z" fill="#f0e040" /><path d="M8 8h7L8 15Z" fill="#fff" /></>,
                <><rect x="5" y="1" width="9" height="7" fill="#6070b0" /><rect x="1" y="6" width="9" height="7" fill="#5060a0" stroke="#ccd" /><path d="M8 9l7 6M15 9l-7 6" stroke="#e02020" strokeWidth="2" /></>,
                <><rect x="5" y="1" width="9" height="7" fill="#6070b0" /><rect x="1" y="6" width="9" height="7" fill="#5060a0" stroke="#ccd" /><path d="M8 9l7 6M15 9l-7 6" stroke="#e02020" strokeWidth="2" /></>,
                <><circle cx="8" cy="8" r="7" fill="#20a040" /><path d="M3 8a5 5 0 0 1 9-3" stroke="#e03020" strokeWidth="2.5" fill="none" /><path d="M13 8a5 5 0 0 1-8 4" stroke="#e0d040" strokeWidth="2" fill="none" /></>,
                <><rect x="1" y="3" width="9" height="7" fill="#5060a0" stroke="#dde" /><path d="M12 2c2 3 2 6 0 8" stroke="#fff" fill="none" /><path d="M6 9l7 6M13 9l-7 6" stroke="#e02020" strokeWidth="2" /></>,
                <><rect width="16" height="16" fill="#fff" stroke="#000" /><circle cx="7" cy="8" r="5" fill="none" stroke="#e01010" strokeWidth="2" /><path d="M3 12L11 4" stroke="#e01010" strokeWidth="2" /><path d="M11 14V7M14 14V3" stroke="#111" strokeWidth="2" /></>,
                <><path d="M2 14h12L10 9V5H6v4Z" fill="#e02020" /><rect x="4" y="1" width="8" height="7" fill="#112" /><circle cx="8" cy="5" r="2" fill="#2040d0" /></>,
                <><circle cx="8" cy="8" r="6" fill="#888" stroke="#dde" /><circle cx="7" cy="7" r="2.5" fill="#eee" /><path d="M12 14c2-1 3-3 3-5" stroke="#dde" fill="none" /></>,
                <><rect width="16" height="16" fill="#fff" stroke="#000" /><path d="M4 1v14" stroke="#086" /><path d="M4 2 L12 6 L4 9Z" fill="#10c040" /><rect x="7" y="10" width="8" height="5" fill="#aaa" stroke="#000" /></>,
              ].map((ic, i) => <svg key={i} width="16" height="16" viewBox="0 0 16 16">{ic}</svg>)}
            </TrayGrid>
            <Clock><span>21:34</span><span>воскресенье</span><span>12.08.2007</span></Clock>
          </Tray>
        </RightTask>
      </TaskBar>
    </Page>
  );
}
